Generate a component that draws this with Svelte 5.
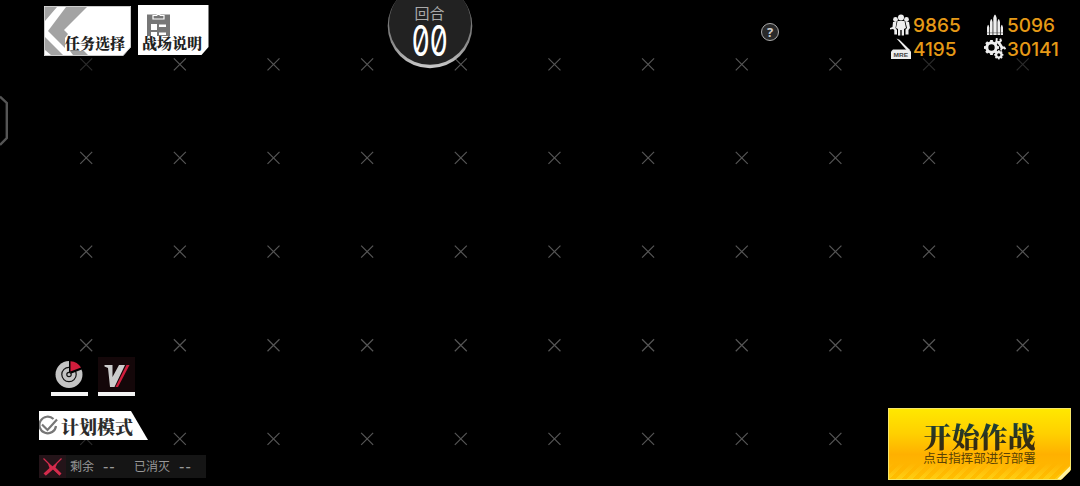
<script>
    let turn = $state('00');
    let planMode = $state(false);
    let remaining = $state('--');
    let destroyed = $state('--');

    const resources = { manpower: 9865, ammo: 5096, rations: 4195, parts: 30141 };

    // map grid marks
    const step = 93.65;
    const marks = [];
    for (let row = 0; row < 5; row++) {
        for (let col = 0; col < 11; col++) {
            const x = 86.2 + col * step;
            const y = 64.3 + row * 93.65;
            const dim = (row === 0 && (col === 0 || col > 8)) || (row === 4 && col === 0);
            marks.push({ x, y, dim });
        }
    }

    const teeth = [0, 45, 90, 135, 180, 225, 270, 315];
</script>

<main class="battle">
    <svg class="map" viewBox="0 0 1080 486">
        {#each marks as m}
            <path class:dim={m.dim} d="M{m.x - 6} {m.y - 6}l12 12m0 -12l-12 12" />
        {/each}
    </svg>

    <header>
        <nav>
            <button class="tab mission">
                <svg viewBox="0 0 87 50">
                    <path d="M0 0H87V41L79 50H0Z" fill="#fff" />
                    <path d="M1 1H13L1 15ZM22 1H43L20 24L24 28L21 32V42L4 25ZM1 31L19 49H7L1 44ZM26 45H40L44 49H29Z" fill="#a3a3a3" />
                    <path d="M.5 .5H86.5V41L79 49.5H.5Z" fill="none" stroke="#ccc" />
                </svg>
                <span>任务选择</span>
            </button>
            <button class="tab guide">
                <svg viewBox="0 0 71 50">
                    <path d="M0 0H70.5V42L63.5 50H0Z" fill="#fff" />
                    <path d="M9 9.5H32V31H9Z" fill="#777" />
                    <path d="M15 14V10.5H18.5A2.3 2.3 0 0 1 22.5 10.5H26V14Z" fill="#777" stroke="#fff" stroke-width="1.2" />
                    <path d="M13 19H19V25H13ZM21 19.5H28V22H21ZM13 27H19V31H13ZM21 27.5H28V30H21Z" fill="#fff" />
                </svg>
                <span>战场说明</span>
            </button>
        </nav>

        <div class="turn">
            <svg viewBox="0 0 86 70">
                <defs>
                    <linearGradient id="rim" x1="0" y1="0" x2="0" y2="1">
                        <stop offset="0.2" stop-color="#666" />
                        <stop offset="0.7" stop-color="#888" />
                        <stop offset="1" stop-color="#ccc" />
                    </linearGradient>
                </defs>
                <circle cx="43" cy="26" r="42.3" fill="url(#rim)" />
                <circle cx="43" cy="23.8" r="41" fill="#222" />
                <text class="label" x="42.5" y="18.5" text-anchor="middle">回合</text>
                <text class="count" transform="translate(42.7 55.8) scale(.67 1)" text-anchor="middle">{turn}</text>
            </svg>
        </div>

        <button class="help">?</button>

        <div class="resources">
            <div class="res">
                <svg viewBox="0 0 22 22" fill="#eee">
                    <circle cx="11" cy="3.5" r="3" />
                    <circle cx="5.5" cy="5.5" r="2.4" />
                    <circle cx="16.5" cy="5.5" r="2.4" />
                    <path d="M7.5 7H14.5L16 14L14 15V21.5H11.7V16H10.3V21.5H8V15L6 14Z" />
                    <path d="M3 8H6.5L5.5 14L7 16V20.5H4.3V16L3 15L0 15.5V14L2.5 13ZM15.5 8H19L20 14L18.5 16V20.5H15.5V15.5L17 14Z" />
                </svg>
                <span>{resources.manpower}</span>
            </div>
            <div class="res">
                <svg viewBox="0 0 22 22" fill="#eee">
                    <path d="M9.3 4Q11 -3 12.7 4V21H9.3ZM6 8Q7.3 2 8.6 8V21H6ZM13.4 8Q14.7 2 16 8V21H13.4ZM3 13.5Q4.2 8 5.3 13.5V21H3ZM16.7 13.5Q17.8 8 19 13.5V21H16.7Z" />
                    <path d="M2.5 18.8H19.5" stroke="#444" stroke-width=".5" />
                </svg>
                <span>{resources.ammo}</span>
            </div>
            <div class="res">
                <svg viewBox="0 0 22 22">
                    <path d="M1 13.5L3 11.5H19L21 13.5V21H1Z" fill="#eee" />
                    <path d="M6.5 .5L9.5 1.8L20 12H16.5Z" fill="#eee" />
                    <text class="mre" x="3.5" y="19.3" textLength="14.5" lengthAdjust="spacingAndGlyphs">MRE</text>
                </svg>
                <span>{resources.rations}</span>
            </div>
            <div class="res">
                <svg viewBox="0 0 22 22" fill="none" stroke="#eee">
                    <circle cx="7.5" cy="9.5" r="4.7" stroke-width="3" />
                    {#each teeth as a}
                        <path d="M7.5 2V4.5" stroke-width="2.8" transform="rotate({a} 7.5 9.5)" />
                    {/each}
                    <circle cx="14.8" cy="16.8" r="2.7" stroke-width="2.2" />
                    {#each teeth as a}
                        <path d="M14.8 12.2V14.2" stroke-width="1.7" transform="rotate({a} 14.8 16.8)" />
                    {/each}
                    <path d="M14.5 4L18.5 10.5" stroke-width="2.8" />
                    <path d="M12.8 .2L12.5 3.2L14.7 4.6L17 2.8L16.2 .6M17 12.4L17.6 10.3L20 9.3L21.5 11.2" stroke-width="1.9" />
                </svg>
                <span>{resources.parts}</span>
            </div>
        </div>
    </header>

    <svg class="drawer" viewBox="0 0 9 52">
        <path d="M0 1.5L6.8 8V43L0 50" fill="none" stroke="#555" stroke-width="2.4" />
    </svg>

    <footer>
        <div class="tools">
            <div class="toggles">
                <button class="toggle">
                    <svg viewBox="0 0 37 35">
                        <circle cx="18" cy="17.5" r="13.5" fill="#c4c4c4" />
                        <circle cx="18" cy="17.5" r="7.2" fill="none" stroke="#111" stroke-width="1.2" />
                        <path d="M18 17.5V1.5H32V12Z" fill="#000" />
                        <path d="M19.5 14.5V4.2Q26.5 4.6 30 10.5Z" fill="#d01d3c" />
                        <circle cx="18" cy="17.5" r="2.2" fill="#c4c4c4" stroke="#111" stroke-width="1.2" />
                    </svg>
                </button>
                <button class="toggle victory">
                    <svg viewBox="0 0 37 35">
                        <path d="M6.5 8H14.5V20L21 8H27L16.5 30H12L10 11L6.5 9.5Z" fill="#ccc" />
                        <path d="M28.5 8H31.5L20 30H17.5Z" fill="#d01d3c" />
                    </svg>
                </button>
            </div>

            <button class="plan" onclick={() => (planMode = !planMode)}>
                <svg viewBox="0 0 21 26" fill="none" stroke="#777" stroke-width="2.2">
                    <path d="M14.5 6A8.3 8.3 0 1 0 17 13" />
                    <path d="M3 11.5L8.5 17L18 6.5" />
                </svg>
                <span>计划模式</span>
            </button>

            <div class="enemies">
                <svg viewBox="0 0 27 23">
                    <path d="M0 0H27V23H0Z" fill="#241419" />
                    <path d="M4.5 3.5L21 20M22.5 3.5L6 20" stroke="#d42b4c" stroke-width="1.2" />
                    <path d="M9 9L12 10.3L13.5 11.5L16 9.5L18 9L16.5 12.5L22.5 18.5L20.5 20.5L14 14.5L7 20.5L4.5 18.5L10.5 13Z" fill="#d42b4c" />
                </svg>
                <span class="left">剩余</span><b>{remaining}</b>
                <span class="gone">已消灭</span><b>{destroyed}</b>
            </div>
        </div>

        <button class="start">
            <strong>开始作战</strong>
            <small>点击指挥部进行部署</small>
        </button>
    </footer>
</main>

<style>
    :global(body) {
        background: #000;
    }

    .battle {
        position: relative;
        display: flex;
        flex-direction: column;
        width: 1080px;
        height: 486px;
        overflow: hidden;
        background: #000;
        font-family: "Noto Sans CJK SC", sans-serif;
    }

    button {
        border: none;
        background: none;
        padding: 0;
        font-family: inherit;
        cursor: pointer;
    }

    svg {
        display: block;
        flex: none;
    }

    .map {
        position: absolute;
        inset: 0;
        width: 1080px;
        height: 486px;
        fill: none;
        stroke: #555;
        stroke-width: 1.2;
    }

    .map .dim {
        stroke: #2b2b2b;
    }

    header {
        position: relative;
        display: flex;
        align-items: flex-start;
        height: 97px;
        padding-left: 44px;
    }

    nav {
        display: flex;
        gap: 7px;
        width: 343px;
        padding-top: 6px;
    }

    .tab {
        display: grid;
        height: 50px;
    }

    .tab svg,
    .tab span {
        grid-area: 1 / 1;
    }

    .tab svg {
        height: 50px;
    }

    .tab span {
        align-self: end;
        justify-self: end;
        padding: 0 6px 4px 0;
        color: #222;
        font: 900 15px/18px "Noto Serif CJK SC", "Noto Sans CJK SC", serif;
    }

    .mission svg {
        width: 87px;
    }

    .guide {
        margin-top: -1px;
    }

    .guide svg {
        width: 71px;
    }

    .guide span {
        padding: 0 7px 3px 0;
    }

    .turn svg {
        width: 86px;
        height: 70px;
    }

    .label {
        fill: #aaa;
        font-size: 15px;
    }

    .count {
        fill: #fff;
        font-family: Inter, sans-serif;
        font-size: 42.5px;
        font-weight: 400;
        font-feature-settings: "zero";
    }

    .help {
        box-sizing: border-box;
        width: 18px;
        height: 18px;
        margin: 23px 0 0 288px;
        border: 1.5px solid #aaa;
        border-radius: 50%;
        background: #292929;
        color: #ccc;
        font: 700 13px/15px "Open Sans", sans-serif;
    }

    .resources {
        display: grid;
        grid-template-columns: 94px 90px;
        grid-auto-rows: 24px;
        margin: 13px 0 0 111px;
    }

    .res {
        display: flex;
        align-items: center;
        gap: 1px;
        color: #e69a17;
        font: 500 19px/24px Inter, sans-serif;
    }

    .res span {
        padding-top: 2px;
    }

    .res svg {
        width: 22px;
        height: 22px;
    }

    .mre {
        fill: #444;
        font: 700 6px "Liberation Sans", sans-serif;
    }

    .drawer {
        position: relative;
        width: 9px;
        height: 52px;
        margin-top: -2px;
    }

    footer {
        position: relative;
        display: flex;
        flex: 1;
        justify-content: space-between;
        align-items: flex-end;
        padding: 0 9px 6px 39px;
    }

    .tools {
        display: flex;
        flex-direction: column;
        margin-bottom: 2px;
    }

    .toggles {
        display: flex;
        gap: 10px;
        padding-left: 12px;
        margin-bottom: 15px;
    }

    .toggle {
        width: 37px;
        border-bottom: 4px solid #f4f4f4;
    }

    .toggle svg {
        width: 37px;
        height: 35px;
    }

    .victory {
        background: #140709;
    }

    .plan {
        display: flex;
        align-items: center;
        width: 109px;
        height: 29px;
        margin-bottom: 15px;
        background: #fff;
        clip-path: polygon(0 0, 92px 0, 100% 100%, 0 100%);
    }

    .plan svg {
        width: 21px;
        height: 26px;
    }

    .plan span {
        padding-left: 1px;
        color: #2b2b2b;
        font: 900 18px/28px "Noto Serif CJK SC", "Noto Sans CJK SC", serif;
        white-space: nowrap;
    }

    .enemies {
        display: flex;
        align-items: center;
        width: 167px;
        height: 23px;
        background: #151515;
        color: #999;
        font-size: 12px;
        line-height: 21px;
    }

    .enemies span,
    .enemies b {
        padding-bottom: 2px;
    }

    .enemies svg {
        width: 27px;
        height: 23px;
    }

    .enemies b {
        width: 18px;
        margin-left: 9px;
        font-size: 15px;
        font-weight: 500;
        letter-spacing: 1px;
    }

    .left {
        margin-left: 4px;
    }

    .gone {
        margin-left: 13px;
    }

    .start {
        display: flex;
        flex-direction: column;
        align-items: center;
        box-sizing: border-box;
        width: 183px;
        height: 72px;
        padding-top: 12px;
        border: 1px solid #f7e66a;
        background:
            linear-gradient(135deg, transparent 168px, #fff3a0 169px) no-repeat,
            linear-gradient(#ffb400 0%, rgba(255, 180, 0, 0) 100%) 0 54px / 100% 14px no-repeat,
            repeating-linear-gradient(135deg, rgba(255, 225, 40, 0.4) 0 4px, transparent 4px 8px) 0 54px / 100% 18px no-repeat,
            linear-gradient(#ffe800 0%, #ffd000 35%, #ffb000 65%, #ffbf00 100%);
        clip-path: polygon(0 0, 100% 0, 100% 62px, 173px 100%, 0 100%);
    }

    .start strong {
        background: linear-gradient(#17443f, #30301a 60%, #3a2a0c);
        background-clip: text;
        color: transparent;
        font: 900 28px/30px "Noto Serif CJK SC", "Noto Sans CJK SC", serif;
    }

    .start small {
        color: #5a4205;
        font-size: 12.5px;
        line-height: 14px;
    }
</style>
